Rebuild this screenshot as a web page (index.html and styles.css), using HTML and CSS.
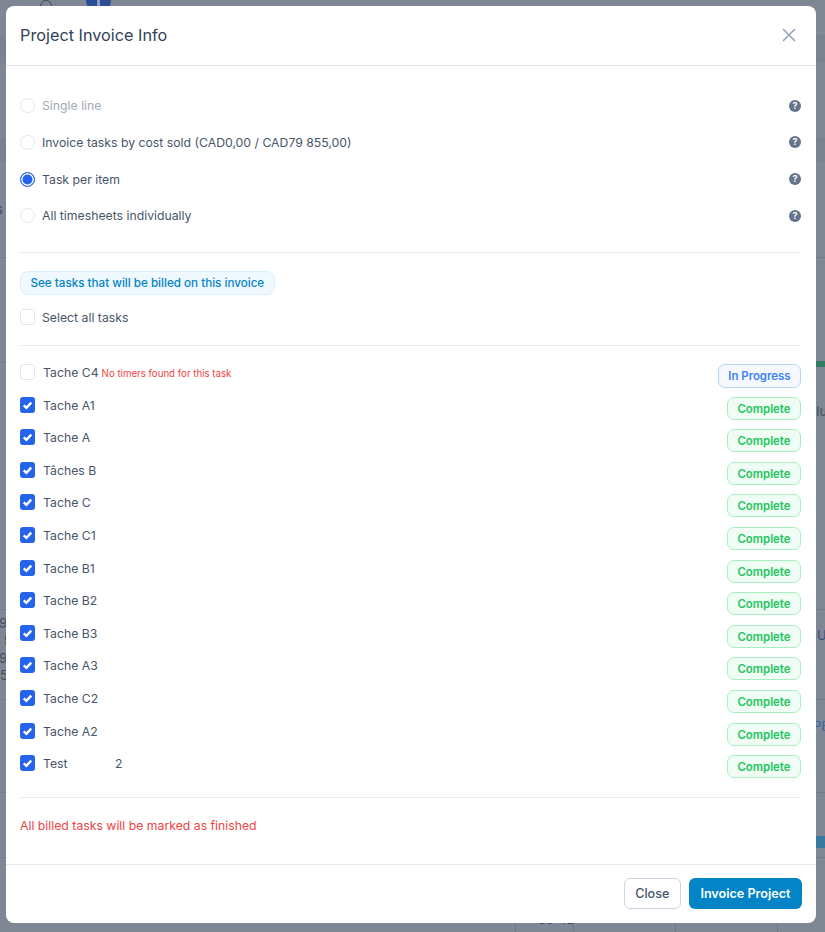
FILE: index.html
```html
<!DOCTYPE html>
<html lang="en">
<head>
    <meta charset="UTF-8">
    <title>Project Invoice Info</title>
    <link rel="stylesheet" href="styles.css">
</head>
<body>

    <!-- Page behind the modal -->
    <div class="backdrop">
        <span class="bg-band band-a"></span>
        <span class="bg-band band-b"></span>
        <span class="bg-line line-a"></span>
        <span class="bg-line line-b"></span>
        <span class="bg-line line-c"></span>
        <span class="bg-line line-d"></span>
        <span class="bg-line line-e"></span>
        <span class="bg-line line-f"></span>
        <span class="bg-search"></span>
        <span class="bg-avatar"></span>
        <span class="bg-bar bar-green"></span>
        <span class="bg-bar bar-blue"></span>
        <span class="bg-text text-s">s</span>
        <span class="bg-text text-alu">alu</span>
        <span class="bg-text text-u">U</span>
        <span class="bg-text text-pe">PE</span>
        <span class="bg-text text-n1">09</span>
        <span class="bg-text text-n2">9</span>
        <span class="bg-text text-n3">09</span>
        <span class="bg-text text-n4">5</span>
        <span class="bg-text text-time">09:42</span>
        <span class="bg-col col-a"></span>
        <span class="bg-col col-b"></span>
        <span class="bg-col col-c"></span>
        <span class="bg-col col-d"></span>
    </div>

    <div class="modal">
        <div class="modal-header">
            <h4>Project Invoice Info</h4>
            <svg class="close-icon" viewBox="0 0 14 14" aria-hidden="true">
                <path d="M1 1L13 13M13 1L1 13"/>
            </svg>
        </div>

        <div class="modal-body">
            <div class="radio-group">
                <div class="radio-row disabled">
                    <span class="radio"></span>
                    <label>Single line</label>
                    <span class="help">?</span>
                </div>
                <div class="radio-row">
                    <span class="radio"></span>
                    <label>Invoice tasks by cost sold (CAD0,00 / CAD79 855,00)</label>
                    <span class="help">?</span>
                </div>
                <div class="radio-row">
                    <span class="radio checked"></span>
                    <label>Task per item</label>
                    <span class="help">?</span>
                </div>
                <div class="radio-row">
                    <span class="radio"></span>
                    <label>All timesheets individually</label>
                    <span class="help">?</span>
                </div>
            </div>

            <hr class="rule rule-radios">

            <a class="see-tasks" href="#">See tasks that will be billed on this invoice</a>

            <div class="select-all">
                <span class="check"></span>
                <label>Select all tasks</label>
            </div>

            <hr class="rule rule-select">

            <div class="task-list">
                <div class="task-row">
                    <span class="check"></span>
                    <label>Tache C4</label>
                    <small class="no-timers">No timers found for this task</small>
                    <span class="status progress">In Progress</span>
                </div>
                <div class="task-row">
                    <span class="check checked"><svg viewBox="0 0 16 16"><path d="M4 8.4L6.8 11L12 5.4"/></svg></span>
                    <label>Tache A1</label>
                    <span class="status complete">Complete</span>
                </div>
                <div class="task-row">
                    <span class="check checked"><svg viewBox="0 0 16 16"><path d="M4 8.4L6.8 11L12 5.4"/></svg></span>
                    <label>Tache A</label>
                    <span class="status complete">Complete</span>
                </div>
                <div class="task-row">
                    <span class="check checked"><svg viewBox="0 0 16 16"><path d="M4 8.4L6.8 11L12 5.4"/></svg></span>
                    <label>Tâches B</label>
                    <span class="status complete">Complete</span>
                </div>
                <div class="task-row">
                    <span class="check checked"><svg viewBox="0 0 16 16"><path d="M4 8.4L6.8 11L12 5.4"/></svg></span>
                    <label>Tache C</label>
                    <span class="status complete">Complete</span>
                </div>
                <div class="task-row">
                    <span class="check checked"><svg viewBox="0 0 16 16"><path d="M4 8.4L6.8 11L12 5.4"/></svg></span>
                    <label>Tache C1</label>
                    <span class="status complete">Complete</span>
                </div>
                <div class="task-row">
                    <span class="check checked"><svg viewBox="0 0 16 16"><path d="M4 8.4L6.8 11L12 5.4"/></svg></span>
                    <label>Tache B1</label>
                    <span class="status complete">Complete</span>
                </div>
                <div class="task-row">
                    <span class="check checked"><svg viewBox="0 0 16 16"><path d="M4 8.4L6.8 11L12 5.4"/></svg></span>
                    <label>Tache B2</label>
                    <span class="status complete">Complete</span>
                </div>
                <div class="task-row">
                    <span class="check checked"><svg viewBox="0 0 16 16"><path d="M4 8.4L6.8 11L12 5.4"/></svg></span>
                    <label>Tache B3</label>
                    <span class="status complete">Complete</span>
                </div>
                <div class="task-row">
                    <span class="check checked"><svg viewBox="0 0 16 16"><path d="M4 8.4L6.8 11L12 5.4"/></svg></span>
                    <label>Tache A3</label>
                    <span class="status complete">Complete</span>
                </div>
                <div class="task-row">
                    <span class="check checked"><svg viewBox="0 0 16 16"><path d="M4 8.4L6.8 11L12 5.4"/></svg></span>
                    <label>Tache C2</label>
                    <span class="status complete">Complete</span>
                </div>
                <div class="task-row">
                    <span class="check checked"><svg viewBox="0 0 16 16"><path d="M4 8.4L6.8 11L12 5.4"/></svg></span>
                    <label>Tache A2</label>
                    <span class="status complete">Complete</span>
                </div>
                <div class="task-row">
                    <span class="check checked"><svg viewBox="0 0 16 16"><path d="M4 8.4L6.8 11L12 5.4"/></svg></span>
                    <label class="test-name">Test</label>
                    <span class="task-count">2</span>
                    <span class="status complete">Complete</span>
                </div>
            </div>

            <hr class="rule rule-tasks">

            <p class="billed-note">All billed tasks will be marked as finished</p>
        </div>

        <div class="modal-footer">
            <button class="btn btn-close">Close</button>
            <button class="btn btn-primary">Invoice Project</button>
        </div>
    </div>

</body>
</html>
```

FILE: styles.css
```css
* {
    box-sizing: border-box;
}

html, body {
    height: 100%;
}

body {
    margin: 0;
    padding: 6px 9px 9px 6px;
    font-family: Inter, "Noto Sans", sans-serif;
    font-size: 12.25px;
    color: #475569;
    background-color: #7f8795;
    overflow: hidden;
}

/* Page behind the modal */
.backdrop {
    position: absolute;
    inset: 0;
    overflow: hidden;
}

.bg-band {
    position: absolute;
    left: 0;
    right: 0;
    background-color: #79828f;
}

.band-a { top: 35px; height: 28px; }
.band-b { top: 138px; height: 24px; }

.bg-line {
    position: absolute;
    left: 0;
    right: 0;
    height: 1px;
    background-color: #737b89;
}

.line-a { top: 257px; }
.line-b { top: 362px; }
.line-c { top: 609px; }
.line-d { top: 699px; }
.line-e { top: 792px; }
.line-f { top: 857px; }

.bg-search {
    position: absolute;
    left: 40px;
    top: 0;
    width: 12px;
    height: 12px;
    border: 1.5px solid #3f4a5c;
    border-radius: 50%;
}

.bg-avatar {
    position: absolute;
    left: 86px;
    top: -12px;
    width: 25px;
    height: 25px;
    border-radius: 50%;
    background-color: #2a4f96;
}

.bg-avatar::after {
    content: "";
    position: absolute;
    left: 11px;
    top: 12px;
    width: 3px;
    height: 6px;
    background-color: #8a9bbd;
}

.bg-bar {
    position: absolute;
    left: 780px;
    right: 0;
}

.bar-green { top: 361px; height: 6px; background-color: #2f7c62; }
.bar-blue { top: 836px; height: 12px; background-color: #38799f; }

.bg-text {
    position: absolute;
    font-size: 13px;
    line-height: 16px;
    color: #434c5c;
}

.text-s { left: -4px; top: 201px; }
.text-alu { left: 809px; top: 403px; }
.text-u { left: 817px; top: 627px; color: #33507c; }
.text-pe { left: 813px; top: 718px; color: #2d6aa0; }
.text-n1 { left: -9px; top: 615px; }
.text-n2 { left: 4px; top: 632px; }
.text-n3 { left: -9px; top: 650px; }
.text-n4 { left: 0; top: 667px; }
.text-time { left: 538px; top: 911px; }

.bg-col {
    position: absolute;
    top: 923px;
    bottom: 0;
    width: 1px;
    background-color: #6f7785;
}

.col-a { left: 515px; }
.col-b { left: 573px; }
.col-c { left: 675px; }
.col-d { left: 777px; }

/* Modal */
.modal {
    position: relative;
    display: flex;
    flex-direction: column;
    width: 810px;
    height: 917px;
    background-color: #fff;
    border-radius: 8px;
}

.modal-header {
    display: flex;
    justify-content: space-between;
    align-items: center;
    height: 60px;
    padding: 0 20px 2px 14px;
    border-bottom: 1px solid #e2e8f0;
}

.modal-header h4 {
    margin: 0;
    font-size: 16.25px;
    font-weight: 400;
    color: #334155;
}

.close-icon {
    width: 14px;
    height: 14px;
    fill: none;
    stroke: #94a3b8;
    stroke-width: 1.6;
}

.modal-body {
    flex: 1;
    padding: 0 15px 0 14px;
}

.radio-group {
    padding-top: 21.4px;
}

.radio-row {
    display: flex;
    align-items: center;
    height: 36.7px;
}

.radio-row label {
    flex: 1;
    margin-left: 7px;
}

.radio-row.disabled label {
    color: #a2abb8;
}

.radio {
    width: 15px;
    height: 15px;
    margin-left: 0;
    border: 1px solid #e2e8f0;
    border-radius: 50%;
    background-color: #fff;
}

.radio.checked {
    border-color: #2563eb;
    background-color: #2563eb;
    box-shadow: inset 0 0 0 1.5px #fff;
}

.help {
    width: 12px;
    height: 12px;
    border-radius: 50%;
    background-color: #64748b;
    color: #fff;
    font-size: 9px;
    font-weight: 700;
    line-height: 12px;
    text-align: center;
}

.rule {
    margin: 0;
    border: 0;
    border-top: 1px solid #e8ecf1;
}

.rule-radios { margin-top: 17.6px; }
.rule-select { margin-top: 20px; }
.rule-tasks { margin-top: 9.4px; }

.see-tasks {
    display: inline-block;
    margin-top: 18px;
    padding: 0 9.5px;
    height: 24px;
    line-height: 23px;
    font-size: 11.65px;
    font-weight: 500;
    color: #0284c7;
    text-decoration: none;
    background-color: #f0f9ff;
    border: 1px solid #dbeffc;
    border-radius: 8px;
}

.select-all {
    display: flex;
    align-items: center;
    height: 16px;
    margin-top: 14px;
}

.select-all label {
    margin-left: 7px;
    padding-top: 1px;
}

.check {
    flex: none;
    display: block;
    width: 15px;
    height: 16px;
    background-color: #fff;
    border: 1px solid #e2e8f0;
    border-radius: 3px;
}

.check.checked {
    border: 0;
    background-color: #2563eb;
}

.check svg {
    display: block;
    width: 15px;
    height: 16px;
    fill: none;
    stroke: #fff;
    stroke-width: 2.6;
}

.task-list {
    padding-top: 18.3px;
}

.task-row {
    display: flex;
    align-items: flex-start;
    height: 32.6px;
    line-height: 17px;
}

.task-row label {
    margin-left: 8px;
}

.no-timers {
    margin-left: 3px;
    font-size: 9.7px;
    line-height: 19px;
    color: #ef4444;
}

.test-name {
    width: 72px;
}

.task-count {
    color: #475569;
}

.status {
    margin-left: auto;
    padding: 0 9.5px;
    height: 23px;
    line-height: 22.5px;
    font-size: 11.4px;
    font-weight: 600;
    border: 1px solid;
    border-radius: 7px;
}

.status.complete {
    color: #22c55e;
    background-color: #f0fdf4;
    border-color: #a7efc0;
}

.status.progress {
    height: 24px;
    line-height: 22px;
    color: #3b82f6;
    background-color: #f5f9ff;
    border-color: #b5d2fb;
}

.billed-note {
    margin: 19.6px 0 0;
    line-height: 16px;
    color: #ef4444;
}

.modal-footer {
    display: flex;
    justify-content: flex-end;
    gap: 8px;
    height: 59px;
    padding: 13px 14px 0 0;
    border-top: 1px solid #e2e8f0;
}

.btn {
    height: 31px;
    padding: 0 11.5px;
    font-family: inherit;
    font-size: 12.6px;
    font-weight: 500;
    border-radius: 6px;
}

.btn-close {
    padding: 0 10.5px;
    color: #475569;
    background-color: #fff;
    border: 1px solid #cbd5e1;
}

.btn-primary {
    font-weight: 600;
    color: #fff;
    background-color: #0284c7;
    border: 0;
}
```
